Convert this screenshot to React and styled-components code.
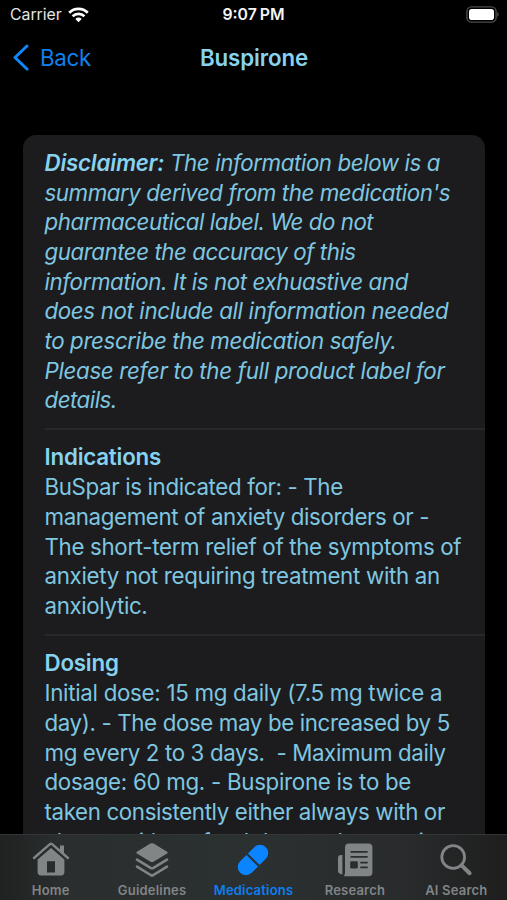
import React from 'react';
import styled, { createGlobalStyle } from 'styled-components';

const GlobalStyle = createGlobalStyle`
  * {
    box-sizing: border-box;
  }

  body {
    margin: 0;
    background: #000;
    font-family: Inter, 'Liberation Sans', sans-serif;
  }
`;

const Screen = styled.div`
  background: #000;
  display: flex;
  flex-direction: column;
  height: 900px;
  overflow: hidden;
  width: 507px;
`;

const StatusBar = styled.div`
  align-items: center;
  color: #e4e4e4;
  display: grid;
  flex: 0 0 auto;
  font-size: 15.8px;
  grid-template-columns: 1fr auto 1fr;
  height: 29px;
  padding: 0 8px 0 10px;
`;

const Carrier = styled.div`
  align-items: center;
  display: flex;
  gap: 6px;
`;

const Clock = styled.div`
  color: #f4f4f4;
  font-weight: 600;
  letter-spacing: 0;
  margin-right: 2px;
  word-spacing: -1px;
`;

const Battery = styled.svg`
  justify-self: end;
`;

const NavBar = styled.header`
  align-items: center;
  display: grid;
  flex: 0 0 auto;
  grid-template-columns: 1fr auto 1fr;
  height: 56px;
  padding: 0 10px 0 11px;
`;

const BackButton = styled.button`
  align-items: center;
  background: none;
  border: 0;
  color: #0f80ee;
  display: flex;
  font: 400 22.3px Inter, sans-serif;
  gap: 11px;
  letter-spacing: -0.3px;
  padding: 0;
`;

const Title = styled.h1`
  color: #87d3ef;
  font-size: 22.3px;
  font-weight: 600;
  letter-spacing: -0.1px;
  margin: 0;
`;

const Content = styled.main`
  flex: 1 1 0;
  min-height: 0;
  overflow: hidden;
  padding: 49.5px 22px 0 22.5px;
`;

const Card = styled.div`
  background: #1c1c1e;
  border-radius: 13px;
  overflow: hidden;
`;

const Section = styled.section`
  color: #7fc6e0;
  font-size: 22.3px;
  font-style: ${(props) => (props.$italic ? 'italic' : 'normal')};
  line-height: ${(props) => (props.$italic ? 29.65 : 29.75)}px;
  margin-left: 22px;
  padding: 13.5px 0 13px;

  & + & {
    border-top: 2px solid #29292b;
    padding-top: 12.5px;
  }
`;

const Line = styled.div`
  letter-spacing: ${(props) => props.$tracking || 0}px;
  white-space: pre;
`;

const Strong = styled.strong`
  color: #87d3ef;
  font-weight: 600;
  letter-spacing: -0.2px;
`;

const TabBar = styled.nav`
  background: linear-gradient(90deg, #202121 0%, #2a2e2f 12%, #2b3031 50%, #292b2c 80%, #1e1e1e 100%);
  border-top: 1px solid #333637;
  display: grid;
  flex: 0 0 auto;
  grid-template-columns: repeat(5, 1fr);
  height: 66px;
`;

const Tab = styled.div`
  align-items: center;
  color: ${(props) => (props.$active ? '#0b7ff0' : '#828586')};
  display: flex;
  flex-direction: column;
  font-size: 13px;
  font-weight: 600;
  letter-spacing: 0.2px;
  line-height: 16px;
  padding-top: 6px;
  white-space: nowrap;

  svg {
    display: block;
    margin-bottom: 3px;
  }
`;

const WifiIcon = () => (
  <svg width="21" height="16" viewBox="0 0 21 16" fill="none" stroke="#fff" strokeWidth="2.7">
    <path d="M1.2 5.8a13.2 13.2 0 0 1 18.6 0" />
    <path d="M4.6 9.2a8.4 8.4 0 0 1 11.8 0" />
    <path d="M10.5 15.3l-3.2-3.4a4.6 4.6 0 0 1 6.4 0z" fill="#fff" stroke="none" />
  </svg>
);

const BatteryIcon = () => (
  <Battery width="34" height="17" viewBox="0 0 34 17">
    <rect x="1.9" y="0.9" width="29.2" height="15.2" rx="4.6" fill="none" stroke="#4b4b4b" strokeWidth="1.4" />
    <rect x="4" y="3" width="25" height="11" rx="2.8" fill="#fff" />
    <path d="M32.4 6.2c1.6.6 1.6 4 0 4.6z" fill="#5a5a5a" />
  </Battery>
);

const ChevronIcon = () => (
  <svg width="18" height="28" viewBox="0 0 18 28" fill="none" stroke="#0f86fb" strokeWidth="3" strokeLinecap="round" strokeLinejoin="round">
    <path d="M16 3L4 14.5L16 26" />
  </svg>
);

const HomeIcon = () => (
  <svg width="38" height="38" viewBox="0 0 38 38" fill="currentColor">
    <path d="M28 4.6h4v10l-4-3.6z" />
    <path d="M2 17L17.6 3.4q1.4-1.1 2.8 0L36 17" fill="none" stroke="currentColor" strokeWidth="2.4" strokeLinecap="round" />
    <path fillRule="evenodd" d="M19 7L32.4 18.6V31q0 3.4-3.4 3.4H9q-3.4 0-3.4-3.4V18.6zM15 20.2V31.4h8V20.2z" />
  </svg>
);

const LayersIcon = () => (
  <svg width="38" height="38" viewBox="0 0 38 38" fill="currentColor">
    <path d="M17.4 2.6q1.6-.8 3.2 0l13.5 8.2q1.4.9 0 1.8l-13.5 8.2q-1.6.8-3.2 0L3.9 12.6q-1.4-.9 0-1.8z" />
    <path d="M4 18.6L17.6 26.8q1.4.8 2.8 0L34 18.6M4 25.6L17.6 34q1.4.8 2.8 0L34 25.6" fill="none" stroke="currentColor" strokeWidth="2.6" strokeLinecap="round" />
  </svg>
);

const PillIcon = () => (
  <svg width="38" height="38" viewBox="0 0 38 38" fill="#0a84ff">
    <g transform="rotate(-45 19 19)">
      <path d="M18 10.8V27.2H9a8.2 8.2 0 0 1 0-16.4z" />
      <path d="M20 10.8V27.2H29a8.2 8.2 0 0 0 0-16.4z" />
    </g>
  </svg>
);

const NewsIcon = () => (
  <svg width="38" height="38" viewBox="0 0 38 38" fill="currentColor">
    <path d="M6.4 14V33.4Q2 33.4 2 29.6V17.4Q2 14 5 14z" />
    <path fillRule="evenodd" d="M13 2.4H32.4q4 0 4 4V31.2q0 4-4 4H8q1-1.6 1-4V6.4q0-4 4-4z" />
    <path d="M15.2 10.8H31M15.2 15.8H31M25 21.6H31M25 26.4H31" stroke="#2a2e2f" strokeWidth="1.8" strokeLinecap="round" />
    <rect x="14.2" y="20.2" width="7.6" height="7.4" rx="1.4" fill="#2a2e2f" />
  </svg>
);

const SearchIcon = () => (
  <svg width="38" height="38" viewBox="0 0 38 38" fill="none" stroke="currentColor" strokeLinecap="round">
    <circle cx="16.2" cy="16" r="11.4" strokeWidth="2.8" />
    <path d="M24.6 24.4L32.6 32.2" strokeWidth="4" />
  </svg>
);

const disclaimer = [
  { text: "summary derived from the medication's", tracking: -0.43 },
  { text: 'pharmaceutical label. We do not', tracking: -0.46 },
  { text: 'guarantee the accuracy of this', tracking: -0.46 },
  { text: 'information. It is not exhuastive and', tracking: -0.39 },
  { text: 'does not include all information needed', tracking: -0.355 },
  { text: 'to prescribe the medication safely.', tracking: -0.38 },
  { text: 'Please refer to the full product label for', tracking: -0.31 },
  { text: 'details.', tracking: -0.5 },
];

const sections = [
  {
    title: 'Indications',
    lines: [
      { text: 'BuSpar is indicated for: - The', tracking: -0.35 },
      { text: 'management of anxiety disorders or -', tracking: -0.37 },
      { text: 'The short-term relief of the symptoms of', tracking: -0.325 },
      { text: 'anxiety not requiring treatment with an', tracking: -0.3 },
      { text: 'anxiolytic.', tracking: -0.36 },
    ],
  },
  {
    title: 'Dosing',
    lines: [
      { text: 'Initial dose: 15 mg daily (7.5 mg twice a', tracking: -0.285 },
      { text: 'day). - The dose may be increased by 5', tracking: -0.37 },
      { text: 'mg every 2 to 3 days.  - Maximum daily', tracking: -0.37 },
      { text: 'dosage: 60 mg. - Buspirone is to be', tracking: -0.285 },
      { text: 'taken consistently either always with or', tracking: -0.36 },
      { text: 'always without food due to changes in', tracking: -0.36 },
    ],
  },
];

const tabs = [
  { label: 'Home', icon: HomeIcon },
  { label: 'Guidelines', icon: LayersIcon },
  { label: 'Medications', icon: PillIcon, active: true },
  { label: 'Research', icon: NewsIcon },
  { label: 'AI Search', icon: SearchIcon },
];

const App = () => (
  <>
    <GlobalStyle />
    <Screen>
      <StatusBar>
        <Carrier>
          Carrier
          <WifiIcon />
        </Carrier>
        <Clock>9:07 PM</Clock>
        <BatteryIcon />
      </StatusBar>
      <NavBar>
        <BackButton type="button">
          <ChevronIcon />
          Back
        </BackButton>
        <Title>Buspirone</Title>
      </NavBar>
      <Content>
        <Card>
          <Section $italic>
            <Line $tracking={-0.4}>
              <Strong>Disclaimer:</Strong> The information below is a
            </Line>
            {disclaimer.map((line) => (
              <Line key={line.text} $tracking={line.tracking}>{line.text}</Line>
            ))}
          </Section>
          {sections.map((section) => (
            <Section key={section.title}>
              <Line>
                <Strong>{section.title}</Strong>
              </Line>
              {section.lines.map((line) => (
                <Line key={line.text} $tracking={line.tracking}>{line.text}</Line>
              ))}
            </Section>
          ))}
        </Card>
      </Content>
      <TabBar>
        {tabs.map(({ label, icon: Icon, active }) => (
          <Tab key={label} $active={active}>
            <Icon />
            {label}
          </Tab>
        ))}
      </TabBar>
    </Screen>
  </>
);

export default App;
